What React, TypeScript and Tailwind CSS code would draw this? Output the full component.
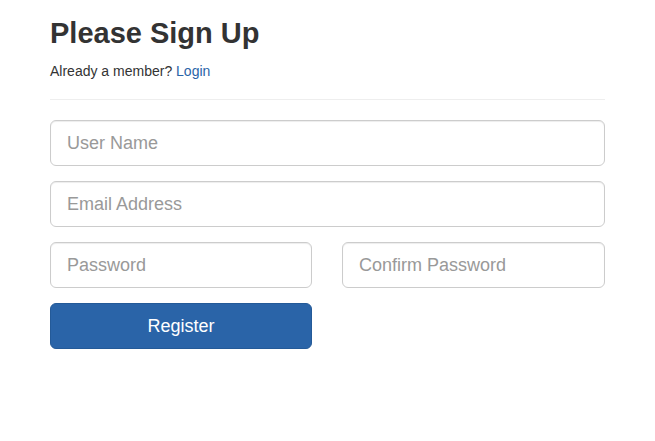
import React from "react";

export default function App() {
  const input =
    "h-[46px] w-full rounded-[6px] border border-[#cccccc] bg-white px-4 text-[18px] text-[#555] placeholder:text-[#999] shadow-[inset_0_1px_1px_rgba(0,0,0,0.075)] outline-none";
  return (
    <div className="min-h-[441px] w-[655px] bg-white font-['Liberation_Sans',Helvetica,Arial,sans-serif] text-[#333]">
      <div className="w-[555px] ml-[50px] pt-[17px]">
        <h2 className="text-[29px] leading-[32px] font-bold text-[#333]">Please Sign Up</h2>
        <p className="mt-[12px] text-[14px] leading-[20px]">
          Already a member? <a className="text-[#2a64a8]">Login</a>
        </p>
        <hr className="mt-[18px] mb-[20px] border-t border-[#eeeeee]" />
        <div className="flex flex-col gap-[15px]">
          <input className={input} placeholder="User Name" />
          <input className={input} placeholder="Email Address" />
          <div className="grid grid-cols-[262px_1fr] gap-[30px]">
            <input className={input} placeholder="Password" />
            <input className={input} placeholder="Confirm Password" />
          </div>
          <div className="grid grid-cols-[262px_1fr] gap-[30px]">
            <button className="h-[46px] rounded-[6px] border border-[#245a98] bg-[#2a64a8] text-[18px] text-white">
              Register
            </button>
          </div>
        </div>
      </div>
    </div>
  );
}
